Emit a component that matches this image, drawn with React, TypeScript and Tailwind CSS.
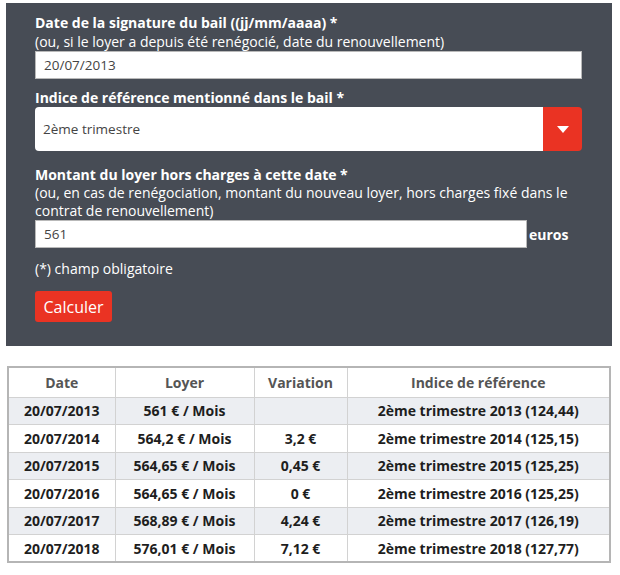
const rows = [
  { date: "20/07/2013", loyer: "561 € / Mois", variation: "", indice: "2ème trimestre 2013 (124,44)" },
  { date: "20/07/2014", loyer: "564,2 € / Mois", variation: "3,2 €", indice: "2ème trimestre 2014 (125,15)" },
  { date: "20/07/2015", loyer: "564,65 € / Mois", variation: "0,45 €", indice: "2ème trimestre 2015 (125,25)" },
  { date: "20/07/2016", loyer: "564,65 € / Mois", variation: "0 €", indice: "2ème trimestre 2016 (125,25)" },
  { date: "20/07/2017", loyer: "568,89 € / Mois", variation: "4,24 €", indice: "2ème trimestre 2017 (126,19)" },
  { date: "20/07/2018", loyer: "576,01 € / Mois", variation: "7,12 €", indice: "2ème trimestre 2018 (127,77)" },
];

export default function App() {
  return (
    <div className="w-[620px] h-[575px] bg-white pl-[6px] pr-[8px] pt-[3px] font-['Open_Sans',sans-serif]">
      {/* Form panel */}
      <div className="bg-[#474c55] pl-[29px] pr-[29px] pt-[10px] pb-[24px] text-white">
        <label className="block text-[14px] leading-[19px] font-bold">
          Date de la signature du bail ((jj/mm/aaaa) *
        </label>
        <p className="text-[14px] leading-[19px]">(ou, si le loyer a depuis été renégocié, date du renouvellement)</p>
        <div className="h-[28px] w-[547px] bg-white border border-[#b9b9b9] flex items-center pl-[8px] text-[13.5px] text-[#444]">
          20/07/2013
        </div>

        <label className="block mt-[9px] text-[14px] leading-[19px] font-bold">
          Indice de référence mentionné dans le bail *
        </label>
        <div className="h-[44px] w-[547px] flex rounded-[4px] overflow-hidden">
          <div className="flex-1 bg-white flex items-center pl-[8px] text-[13.5px] text-[#444]">2ème trimestre</div>
          <div className="w-[39px] bg-[#ea3323] flex items-center justify-center">
            <svg width="12" height="7" viewBox="0 0 12 7">
              <polygon points="0,0 12,0 6,7" fill="white" />
            </svg>
          </div>
        </div>

        <label className="block mt-[14px] text-[14px] leading-[19px] font-bold">
          Montant du loyer hors charges à cette date *
        </label>
        <p className="text-[14px] leading-[18px]">
          (ou, en cas de renégociation, montant du nouveau loyer, hors charges fixé dans le contrat de renouvellement)
        </p>
        <div className="flex items-center">
          <div className="h-[28px] w-[492px] bg-white border border-[#b9b9b9] flex items-center pl-[8px] text-[13.5px] text-[#444]">
            561
          </div>
          <span className="ml-[2px] text-[14px] font-bold">euros</span>
        </div>

        <p className="mt-[11px] text-[14px] leading-[19px]">(*) champ obligatoire</p>
        <button className="mt-[13px] h-[31px] w-[77px] rounded-[3px] bg-[#ea3323] text-white text-[16px]">Calculer</button>
      </div>

      {/* Results */}
      <table className="mt-[20px] ml-[1px] w-[604px] border-collapse border-2 border-[#b5b5b5] text-[14px] text-center">
        <thead>
          <tr className="h-[30px] text-[#555] font-bold">
            <th className="w-[107px] border border-[#d2d2d2]">Date</th>
            <th className="w-[139px] border border-[#d2d2d2]">Loyer</th>
            <th className="w-[93px] border border-[#d2d2d2]">Variation</th>
            <th className="border border-[#d2d2d2]">Indice de référence</th>
          </tr>
        </thead>
        <tbody>
          {rows.map((r, i) => (
            <tr key={r.date} className={`h-[27.5px] font-bold text-[#1e1e1e] ${i % 2 === 0 ? "bg-[#eceef2]" : "bg-white"}`}>
              <td className="border border-[#d2d2d2]">{r.date}</td>
              <td className="border border-[#d2d2d2]">{r.loyer}</td>
              <td className="border border-[#d2d2d2]">{r.variation}</td>
              <td className="border border-[#d2d2d2]">{r.indice}</td>
            </tr>
          ))}
        </tbody>
      </table>
    </div>
  );
}
